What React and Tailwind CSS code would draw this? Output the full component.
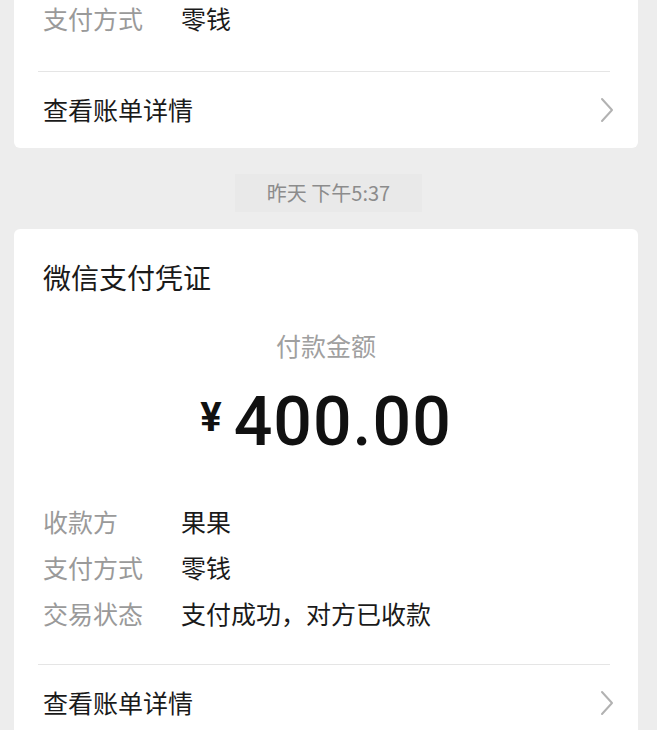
import React from "react";

const font = { fontFamily: '"Noto Sans CJK SC", "Noto Sans", sans-serif' };

const Chevron = () => (
  <svg width="14" height="26" viewBox="0 0 14 26" fill="none">
    <path d="M2 2 L12 13 L2 24" stroke="#b2b2b2" strokeWidth="2" strokeLinecap="round" strokeLinejoin="round" />
  </svg>
);

const Row = ({ label, value }) => (
  <div className="flex items-center h-[46px]">
    <span className="w-[138px] text-[25px] text-[#9a9a9a]">{label}</span>
    <span className="text-[25px] text-[#1a1a1a]">{value}</span>
  </div>
);

const DetailLink = () => (
  <div className="flex items-center justify-between h-[76px] pr-6">
    <span className="text-[25px] text-[#1a1a1a]">查看账单详情</span>
    <Chevron />
  </div>
);

export default function App() {
  return (
    <div className="w-[657px] h-[730px] overflow-hidden bg-[#ededed]" style={font}>
      {/* previous receipt, scrolled off the top */}
      <div className="ml-[14px] w-[624px] -mt-[9px] bg-white rounded-b-[6px] pl-[29px]">
        <div className="flex items-center h-[52px] pt-[4px]">
          <span className="w-[138px] text-[25px] text-[#9a9a9a]">支付方式</span>
          <span className="text-[25px] text-[#1a1a1a]">零钱</span>
        </div>
        <div className="mt-[28px] mr-[28px] -ml-[5px] border-t border-[#e5e5e5]" />
        <DetailLink />
      </div>

      <div className="flex justify-center mt-[26px]">
        <div className="px-[32px] h-[38px] flex items-center bg-[#e9e9e9] text-[20px] text-[#8c8c8c]">
          昨天 下午5:37
        </div>
      </div>

      <div className="ml-[14px] w-[624px] mt-[17px] bg-white rounded-[6px] pl-[29px]">
        <div className="pt-[28px] text-[28px] text-[#1a1a1a] leading-[40px]">微信支付凭证</div>
        <div className="pr-[29px] mt-[32px] text-center text-[25px] text-[#a0a0a0] leading-[32px]">付款金额</div>
        <div className="pr-[29px] mt-[25px] flex items-start justify-center text-[#111]" style={{ fontFamily: 'Roboto, "Liberation Sans", sans-serif' }}>
          <span className="text-[40px] font-bold leading-none mt-[12px] mr-[12px]">¥</span>
          <span className="text-[68px] font-medium leading-[72px] tracking-[1px]">400.00</span>
        </div>
        <div className="mt-[41px]">
          <Row label="收款方" value="果果" />
          <Row label="支付方式" value="零钱" />
          <Row label="交易状态" value="支付成功，对方已收款" />
        </div>
        <div className="mt-[27px] mr-[28px] -ml-[5px] border-t border-[#e5e5e5]" />
        <DetailLink />
      </div>
    </div>
  );
}
